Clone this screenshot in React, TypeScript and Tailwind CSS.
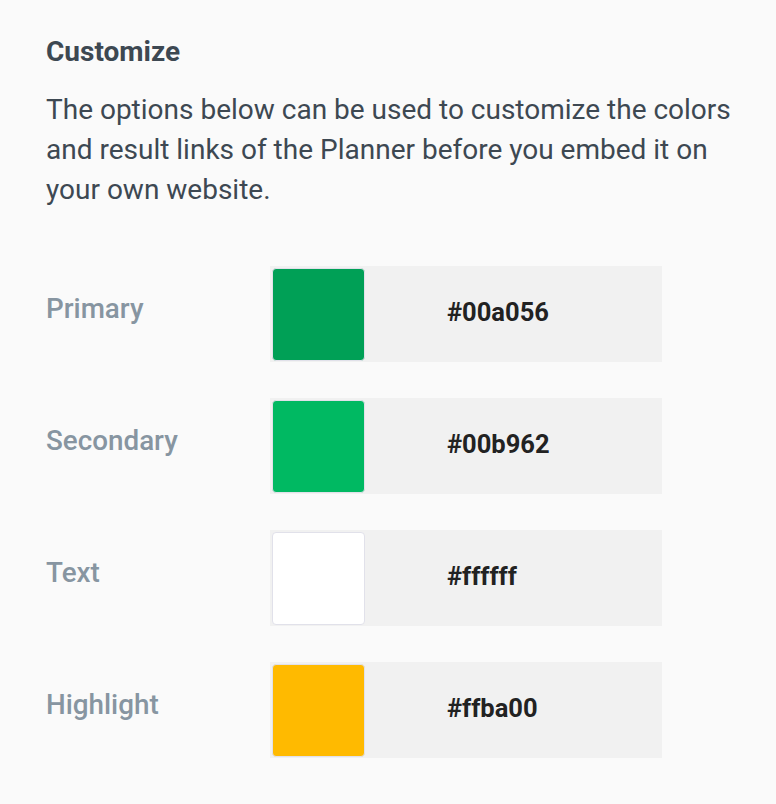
const COLORS = [
  { label: 'Primary', value: '#00a056' },
  { label: 'Secondary', value: '#00b962' },
  { label: 'Text', value: '#ffffff' },
  { label: 'Highlight', value: '#ffba00' },
]

function ColorRow({ label, value }: { label: string; value: string }) {
  return (
    <div className="flex items-center">
      <div className="w-[224px] pb-[10px] text-[27.8px] font-medium text-[#8795a1]">{label}</div>
      <div className="flex h-[96px] w-[392px] items-center bg-[#f1f1f1] p-[2px]">
        <div
          className="h-[93px] w-[93px] rounded-[4px] border border-[#e1e1ea]"
          style={{ backgroundColor: value }}
        />
        <div className="pb-[4px] pl-[82px] text-[25.5px] font-bold text-[#222]">{value}</div>
      </div>
    </div>
  )
}

export default function App() {
  return (
    <div
      className="min-h-[804px] w-[776px] bg-[#fafafa] pl-[46px] pr-[20px] pt-[36px] text-[#3d4852]"
      style={{ fontFamily: 'Roboto, sans-serif' }}
    >
      <h2 className="text-[28px] font-bold leading-[32px]">Customize</h2>
      <p className="mt-[22px] text-[28px] leading-[40px]">
        The options below can be used to customize the colors and result links of the Planner
        before you embed it on your own website.
      </p>
      <div className="mt-[56px] flex flex-col gap-[36px]">
        {COLORS.map((c) => (
          <ColorRow key={c.label} {...c} />
        ))}
      </div>
    </div>
  )
}
